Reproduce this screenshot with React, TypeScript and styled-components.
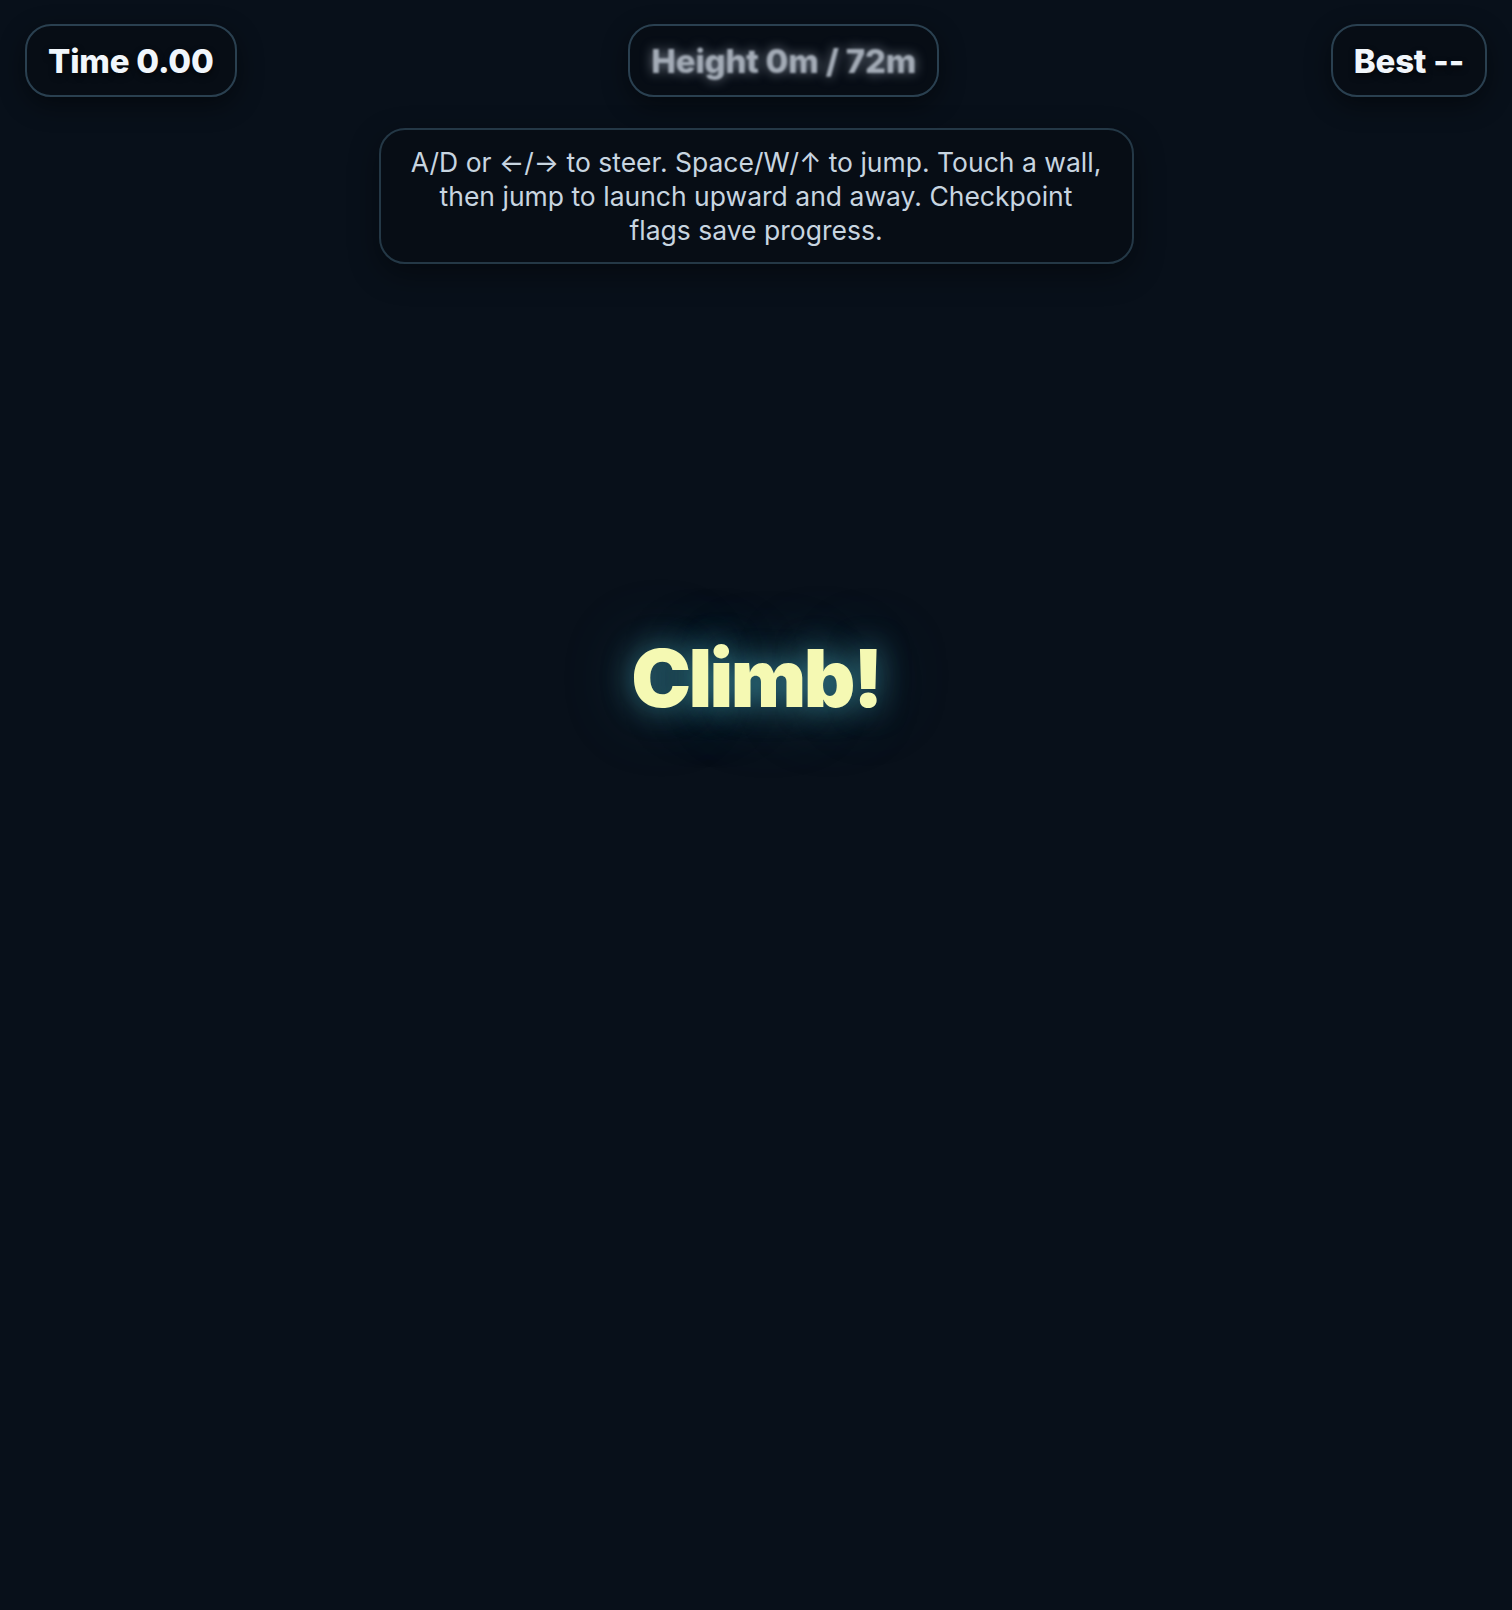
import styled, { createGlobalStyle } from "styled-components";

const GlobalStyle = createGlobalStyle`
    html, body {
        margin: 0;
        padding: 0;
        background: #08101a;
    }
    * {
        box-sizing: border-box;
    }
`;

const Page = styled.main`
    min-height: 1610px;
    background: #08101a;
    font-family: Inter, "Noto Sans", sans-serif;
    display: flex;
    flex-direction: column;
    align-items: center;
    padding: 24px 25px;
`;

const TopBar = styled.header`
    width: 100%;
    display: flex;
    justify-content: space-between;
    align-items: center;
`;

const Pill = styled.div<{ $dim?: boolean }>`
    height: 73px;
    display: flex;
    align-items: center;
    padding: 0 21px;
    border: 2px solid #2a4050;
    border-radius: 26px;
    background: rgba(7, 13, 21, 0.85);
    box-shadow: 0 8px 26px rgba(0, 0, 0, 0.45);
    color: ${(p) => (p.$dim ? "#a3abb6" : "#f1f6fb")};
    font-size: 33px;
    font-weight: 800;
    letter-spacing: -0.2px;
    white-space: nowrap;
    text-shadow: ${(p) =>
        p.$dim
            ? "0 0 12px rgba(190, 200, 215, 0.6)"
            : "0 3px 6px rgba(0, 0, 0, 0.6)"};
`;

const BlurText = styled.span`
    filter: blur(1.1px);
`;

const Hint = styled.p`
    width: 755px;
    margin: 31px 0 0;
    padding: 15px 28px;
    border: 2px solid #243846;
    border-radius: 26px;
    background: rgba(7, 13, 21, 0.85);
    box-shadow: 0 10px 30px rgba(0, 0, 0, 0.4);
    color: #c8d5e0;
    font-size: 26.5px;
    line-height: 34px;
    text-align: center;
`;

const Banner = styled.h1`
    margin: 374px 0 0;
    color: #f5f9b3;
    font-size: 80px;
    font-weight: 900;
    line-height: 1;
    letter-spacing: -2.5px;
    text-shadow: 0 0 30px rgba(90, 200, 220, 0.55), 0 0 70px rgba(70, 170, 190, 0.35);
`;

export default function App(): JSX.Element {
    return (
        <>
            <GlobalStyle />
            <Page>
                <TopBar>
                    <Pill>Time 0.00</Pill>
                    <Pill $dim>
                        <BlurText>Height 0m / 72m</BlurText>
                    </Pill>
                    <Pill>Best --</Pill>
                </TopBar>
                <Hint>
                    A/D or ←/→ to steer. Space/W/↑ to jump. Touch a wall, then jump to
                    launch upward and away. Checkpoint flags save progress.
                </Hint>
                <Banner>Climb!</Banner>
            </Page>
        </>
    );
}
